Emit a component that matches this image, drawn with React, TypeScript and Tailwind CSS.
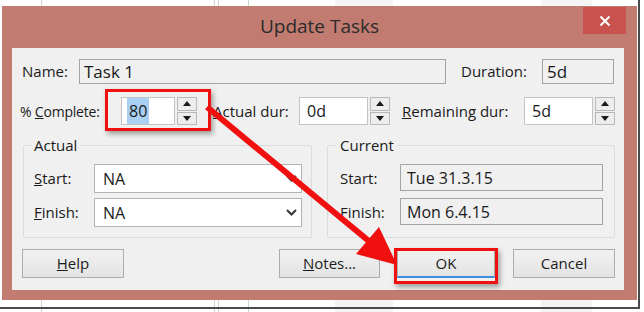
import React from "react";

function Spin() {
    return (
        <div className="ml-[2px] flex h-[28px] w-[20px] flex-col gap-[1px]">
            <div className="flex flex-1 items-center justify-center border border-[#b9b9b9] bg-[#ededed]">
                <svg width="8" height="5" viewBox="0 0 8 5"><polygon points="4,0 8,5 0,5" fill="#1a1a1a" /></svg>
            </div>
            <div className="flex flex-1 items-center justify-center border border-[#b9b9b9] bg-[#ededed]">
                <svg width="8" height="5" viewBox="0 0 8 5"><polygon points="0,0 8,0 4,5" fill="#1a1a1a" /></svg>
            </div>
        </div>
    );
}

function Chevron() {
    return (
        <svg width="11" height="7" viewBox="0 0 11 7" className="mr-[4px]">
            <polyline points="1,1 5.5,5.5 10,1" fill="none" stroke="#333" strokeWidth="2" />
        </svg>
    );
}

function Btn({ children, w, className = "" }: { children: React.ReactNode; w: string; className?: string }) {
    return (
        <div className={`flex h-[29px] items-center justify-center border border-[#adadad] bg-gradient-to-b from-[#f2f2f2] to-[#e3e3e3] text-[15px] text-[#1c1c1c] ${w} ${className}`}>
            {children}
        </div>
    );
}

export default function App() {
    return (
        <div className="relative h-[312px] w-[644px] overflow-hidden bg-white font-[family-name:'Open_Sans',sans-serif] text-[#1a1a1a]">
            {/* Sheet grid behind the dialog */}
            <div className="absolute left-[41px] top-0 h-full w-px bg-[#d4d4d4]"></div>
            <div className="absolute left-[214px] top-0 h-full w-px bg-[#d4d4d4]"></div>
            <div className="absolute left-[218px] top-0 h-full w-px bg-[#d4d4d4]"></div>
            <div className="absolute left-[248px] top-0 h-full w-px bg-[#c6dcc6]"></div>
            <div className="absolute left-[335px] top-0 h-full w-[58px] bg-[#f4f4f4]"></div>
            <div className="absolute left-[541px] top-0 h-full w-[51px] bg-[#f4f4f4]"></div>

            <div className="relative h-[309px] w-[640px] border-b-2 border-r-2 border-[#4a4a4a] pl-[2px] pt-[6px]">
                {/* Dialog */}
                <div className="flex h-[294px] w-[635px] flex-col bg-[#c27b70]">
                    <div className="grid h-[42px] grid-cols-[1fr_auto_1fr]">
                        <div></div>
                        <div className="self-center pb-[2px] text-[19px] text-[#2b2b2b]">Update Tasks</div>
                        <div className="flex justify-end">
                            <div className="mr-[11px] mt-[1px] flex h-[27px] w-[43px] items-center justify-center bg-[#c9514e]">
                                <svg width="12" height="12" viewBox="0 0 12 12">
                                    <path d="M1.5 1.5 L10.5 10.5 M10.5 1.5 L1.5 10.5" stroke="#fff" strokeWidth="2" />
                                </svg>
                            </div>
                        </div>
                    </div>

                    <div className="ml-[10px] mr-[13px] h-[242px] bg-[#f0f0f0]">
                        {/* Name / Duration */}
                        <div className="flex items-center pl-[10px] pt-[11px]">
                            <div className="w-[57px] text-[15px]">Name:</div>
                            <div className="flex h-[25px] w-[367px] items-center border border-[#a3a3a3] pl-[4px] text-[17px]">Task 1</div>
                            <div className="ml-[15px] w-[81px] text-[15px]">Duration:</div>
                            <div className="flex h-[25px] w-[72px] items-center border border-[#a3a3a3] pl-[4px] text-[17px]">5d</div>
                        </div>

                        {/* Complete / Actual dur / Remaining dur */}
                        <div className="mt-[13px] flex h-[28px] items-center pl-[8px]">
                            <div className="w-[101px] text-[14px] tracking-[-0.2px]">% <span className="underline">C</span>omplete:</div>
                            <div className="flex h-[28px] w-[54px] items-center border border-[#c4c4c4] bg-white pl-[5px] text-[16px]">
                                <span className="bg-[#a9cff2] px-[2px] py-[1px]">80</span>
                            </div>
                            <Spin />
                            <div className="ml-[16px] w-[86px] text-[15px]"><span className="underline">A</span>ctual dur:</div>
                            <div className="flex h-[28px] w-[69px] items-center border border-[#c4c4c4] bg-white pl-[7px] text-[16px]">0d</div>
                            <Spin />
                            <div className="ml-[12px] w-[122px] text-[15px]"><span className="underline">R</span>emaining dur:</div>
                            <div className="flex h-[28px] w-[69px] items-center border border-[#c4c4c4] bg-white pl-[7px] text-[16px]">5d</div>
                            <Spin />
                        </div>

                        {/* Actual / Current groups */}
                        <div className="mt-[10px] flex pl-[11px]">
                            <fieldset className="h-[103px] w-[289px] rounded-[2px] border border-[#dcdcdc] pl-[10px]">
                                <legend className="ml-[-3px] h-[20px] px-[3px] text-[15px] leading-[20px]">Actual</legend>
                                <div className="mt-[9px] flex h-[29px] items-center">
                                    <div className="w-[60px] text-[15px]"><span className="underline">S</span>tart:</div>
                                    <div className="flex h-[29px] w-[208px] items-center justify-between border border-[#b4b4b4] bg-white pl-[8px] text-[16px]">
                                        NA
                                        <Chevron />
                                    </div>
                                </div>
                                <div className="mt-[5px] flex h-[29px] items-center">
                                    <div className="w-[60px] text-[15px]"><span className="underline">F</span>inish:</div>
                                    <div className="flex h-[29px] w-[208px] items-center justify-between border border-[#b4b4b4] bg-white pl-[8px] text-[16px]">
                                        NA
                                        <Chevron />
                                    </div>
                                </div>
                            </fieldset>
                            <fieldset className="ml-[15px] h-[103px] w-[288px] rounded-[2px] border border-[#dcdcdc] pl-[12px]">
                                <legend className="ml-[-4px] h-[20px] px-[4px] text-[15px] leading-[20px]">Current</legend>
                                <div className="mt-[9px] flex h-[29px] items-start">
                                    <div className="mt-[3px] w-[60px] text-[15px]">Start:</div>
                                    <div className="flex h-[27px] w-[203px] items-center border border-[#a3a3a3] pl-[6px] text-[16px]">Tue 31.3.15</div>
                                </div>
                                <div className="mt-[5px] flex h-[29px] items-start">
                                    <div className="mt-[3px] w-[60px] text-[15px]">Finish:</div>
                                    <div className="flex h-[27px] w-[203px] items-center border border-[#a3a3a3] pl-[6px] text-[16px]">Mon 6.4.15</div>
                                </div>
                            </fieldset>
                        </div>

                        {/* Buttons */}
                        <div className="mt-[11px] flex items-start pl-[10px] pr-[9px]">
                            <Btn w="w-[102px]"><span><span className="underline">H</span>elp</span></Btn>
                            <Btn w="w-[101px]" className="ml-auto"><span><span className="underline">N</span>otes...</span></Btn>
                            <Btn w="w-[98px]" className="ml-[17px] border-b-2 border-b-[#3d8ee0]">OK</Btn>
                            <Btn w="w-[102px]" className="ml-[18px]">Cancel</Btn>
                        </div>
                    </div>
                </div>
            </div>

            {/* Red annotations over the dialog */}
            <div className="absolute left-[105px] top-[89px] h-[42px] w-[106px] border-[3px] border-[#f01010] shadow-[2px_3px_5px_rgba(0,0,0,0.35)]"></div>
            <div className="absolute left-[394px] top-[248px] h-[36px] w-[104px] border-[3px] border-[#f01010] shadow-[2px_3px_5px_rgba(0,0,0,0.35)]"></div>
            <svg className="pointer-events-none absolute left-0 top-0" width="644" height="312" viewBox="0 0 644 312">
                <line x1="207" y1="107" x2="370" y2="242" stroke="#f01010" strokeWidth="6" />
                <polygon points="397,265 356,254 379,227" fill="#f01010" />
            </svg>
        </div>
    );
}
